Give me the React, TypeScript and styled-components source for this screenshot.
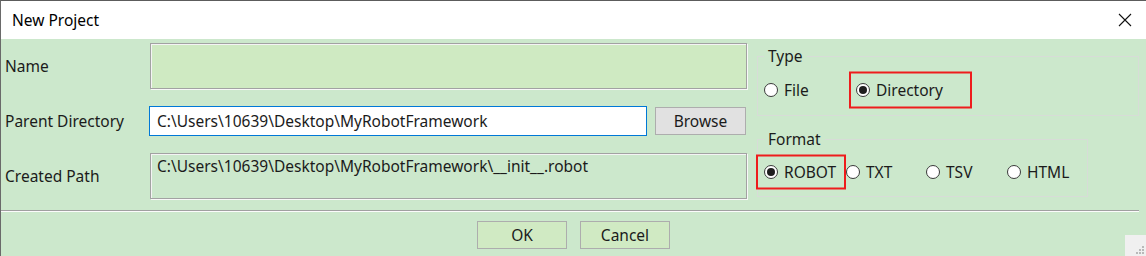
import styled, { createGlobalStyle } from 'styled-components'

const GlobalStyle = createGlobalStyle`
  html, body {
    margin: 0;
    padding: 0;
    background: #cce8cc;
  }
  body {
    font-family: "Noto Sans", "Liberation Sans", sans-serif;
    font-size: 15.5px;
    color: #1b1b1b;
  }
`

const Window = styled.div`
  position: relative;
  width: 1146px;
  height: 256px;
  box-sizing: border-box;
  border-top: 1px solid #5c5c5c;
  border-left: 1px solid #6a6a6a;
  background: #cce8cc;
  display: flex;
  flex-direction: column;
  overflow: hidden;
`

const TitleBar = styled.div`
  height: 38px;
  background: #fff;
  display: flex;
  align-items: center;
  justify-content: space-between;
  padding: 0 14px 0 11px;
  color: #000;
`

const CloseIcon = () => (
  <svg width="14" height="14" viewBox="0 0 14 14">
    <path d="M1 1 L13 13 M13 1 L1 13" stroke="#111" strokeWidth="1.1" fill="none" />
  </svg>
)

const Body = styled.div`
  display: flex;
  gap: 10px;
`

const Form = styled.div`
  width: 746px;
  display: flex;
  flex-direction: column;
  padding-top: 4px;
`

const Row = styled.div<{ $h: number; $mt?: number }>`
  display: grid;
  grid-template-columns: 148px 1fr;
  align-items: center;
  height: ${(p) => p.$h}px;
  margin-top: ${(p) => p.$mt ?? 0}px;
`

const Label = styled.span`
  padding-left: 4px;
  white-space: nowrap;
`

const SunkenBox = styled.div<{ $fill: string }>`
  box-sizing: border-box;
  height: 100%;
  margin-left: 1px;
  background: ${(p) => p.$fill};
  border: 1px solid #a2a2a2;
  box-shadow: inset 1px 1px 0 #f4f4f4, 1px 1px 0 #f8f8f8;
  padding: 1px 6px;
  line-height: 22px;
`

const PathRow = styled.div`
  display: flex;
  gap: 8px;
  height: 100%;
  align-items: center;
`

const TextInput = styled.div`
  box-sizing: border-box;
  width: 498px;
  height: 30px;
  background: #fff;
  border: 1px solid #0078d7;
  padding: 0 7px;
  display: flex;
  align-items: center;
`

const Button = styled.button<{ $fill?: string; $w: number }>`
  box-sizing: border-box;
  width: ${(p) => p.$w}px;
  height: 28px;
  background: ${(p) => p.$fill ?? '#e1e1e1'};
  border: 1px solid #adadad;
  font: inherit;
  color: #1b1b1b;
  padding: 0;
`

const Side = styled.div`
  width: 382px;
  display: flex;
  flex-direction: column;
  padding-top: 7px;
  gap: 13px;
`

const Group = styled.fieldset<{ $w: number; $h: number }>`
  box-sizing: border-box;
  width: ${(p) => p.$w}px;
  height: ${(p) => p.$h}px;
  margin: 0;
  padding: 0 6px;
  border: 1px solid #d7dcd7;

  legend {
    padding: 0 4px;
    line-height: 20px;
  }
`

const Options = styled.div<{ $h: number }>`
  display: flex;
  align-items: center;
  height: ${(p) => p.$h}px;
`

const Option = styled.label<{ $w: number; $mark?: { left: number; w: number; h: number } }>`
  position: relative;
  display: flex;
  align-items: center;
  gap: 6px;
  width: ${(p) => p.$w}px;
  flex-shrink: 0;
  white-space: nowrap;

  ${(p) =>
    p.$mark &&
    `&::after {
      content: '';
      position: absolute;
      left: ${p.$mark.left}px;
      top: 50%;
      width: ${p.$mark.w}px;
      height: ${p.$mark.h}px;
      transform: translateY(-50%);
      box-sizing: border-box;
      border: 2px solid #ee1c1c;
      pointer-events: none;
    }`}
`

const Dot = styled.span<{ $on?: boolean }>`
  box-sizing: border-box;
  width: 14px;
  height: 14px;
  border-radius: 50%;
  border: 1px solid #3a3a3a;
  background: #fff;
  display: flex;
  align-items: center;
  justify-content: center;

  &::before {
    content: '';
    width: 8px;
    height: 8px;
    border-radius: 50%;
    background: ${(p) => (p.$on ? '#1e1e1e' : 'transparent')};
  }
`

const Separator = styled.div`
  margin-top: 11px;
  width: 1138px;
  height: 1px;
  background: #a0a0a0;
  border-bottom: 1px solid #fbfbfb;
`

const Footer = styled.div`
  display: flex;
  justify-content: center;
  gap: 13px;
  padding-top: 9px;
`

const Grip = styled.div`
  position: absolute;
  right: 0;
  bottom: 0;
  width: 21px;
  height: 21px;
  background: #f0f0f0;
  display: flex;
  align-items: flex-end;
  justify-content: flex-end;
`

const GripDots = () => (
  <svg width="12" height="12" viewBox="0 0 12 12">
    {[
      [9, 3],
      [6, 6],
      [9, 6],
      [3, 9],
      [6, 9],
      [9, 9],
    ].map(([x, y]) => (
      <rect key={`${x}-${y}`} x={x - 1} y={y - 1} width="2" height="2" fill="#b9b9b9" />
    ))}
  </svg>
)

export default function App() {
  return (
    <>
      <GlobalStyle />
      <Window>
        <TitleBar>
          <span>New Project</span>
          <CloseIcon />
        </TitleBar>
        <Body>
          <Form>
            <Row $h={46}>
              <Label>Name</Label>
              <SunkenBox $fill="#cfeac2" />
            </Row>
            <Row $h={30} $mt={17}>
              <Label>Parent Directory</Label>
              <PathRow>
                <TextInput>C:\Users\10639\Desktop\MyRobotFramework</TextInput>
                <Button $w={91}>Browse</Button>
              </PathRow>
            </Row>
            <Row $h={46} $mt={17}>
              <Label>Created Path</Label>
              <SunkenBox $fill="#cce8cc">C:\Users\10639\Desktop\MyRobotFramework\__init__.robot</SunkenBox>
            </Row>
          </Form>
          <Side>
            <Group $w={382} $h={70}>
              <legend>Type</legend>
              <Options $h={48}>
                <Option $w={92}>
                  <Dot />
                  File
                </Option>
                <Option $w={120} $mark={{ left: -7, w: 123, h: 37 }}>
                  <Dot $on />
                  Directory
                </Option>
              </Options>
            </Group>
            <Group $w={331} $h={68}>
              <legend>Format</legend>
              <Options $h={46}>
                <Option $w={82} $mark={{ left: -8, w: 90, h: 35 }}>
                  <Dot $on />
                  ROBOT
                </Option>
                <Option $w={80}>
                  <Dot />
                  TXT
                </Option>
                <Option $w={81}>
                  <Dot />
                  TSV
                </Option>
                <Option $w={70}>
                  <Dot />
                  HTML
                </Option>
              </Options>
            </Group>
          </Side>
        </Body>
        <Separator />
        <Footer>
          <Button $w={90} $fill="#d0eac3">OK</Button>
          <Button $w={90} $fill="#d0eac3">Cancel</Button>
        </Footer>
        <Grip>
          <GripDots />
        </Grip>
      </Window>
    </>
  )
}
